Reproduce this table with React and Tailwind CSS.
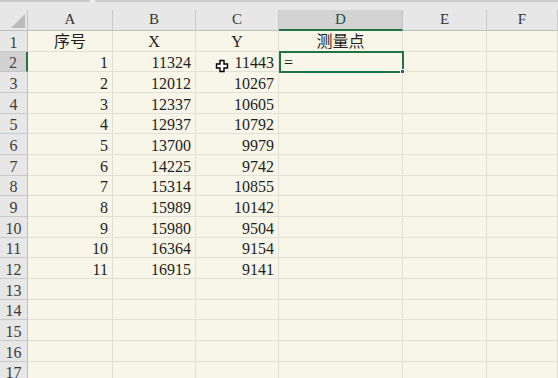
const colB = [11324, 12012, 12337, 12937, 13700, 14225, 15314, 15989, 15980, 16364, 16915];
const colC = [11443, 10267, 10605, 10792, 9979, 9742, 10855, 10142, 9504, 9154, 9141];

const cols = ["A", "B", "C", "D", "E", "F"];

function buildRows() {
  const rows = [];
  for (let r = 1; r <= 17; r++) {
    let cells = ["", "", "", "", "", ""];
    if (r === 1) cells = ["序号", "X", "Y", "测量点", "", ""];
    else if (r <= 12) cells = [String(r - 1), String(colB[r - 2]), String(colC[r - 2]), "", "", ""];
    rows.push({ n: r, cells });
  }
  return rows;
}

function CellCursor() {
  return (
    <svg width="14" height="14" viewBox="0 0 14 14" className="absolute left-[215px] top-[59px]">
      <path
        d="M5 1.5h4v3.5h3.5v4H9v3.5H5V9H1.5V5H5z"
        fill="#fff"
        stroke="#000"
        strokeWidth="1.4"
        strokeLinejoin="miter"
      />
    </svg>
  );
}

export default function App() {
  const rows = buildRows();
  const grid = "grid grid-cols-[28px_85px_83px_83px_124px_84px_1fr]";

  return (
    <div className="relative w-[558px] h-[378px] overflow-hidden bg-[#f8f6e8] text-[#1e1e1e] font-['Liberation_Serif','Noto_Sans_CJK_SC',serif]">
      {/* top edge */}
      <div className="flex h-[2px]">
        <div className="w-[90px] bg-[#c9c9c9]" />
        <div className="w-[5px] bg-[#f0f0f0]" />
        <div className="flex-1 bg-[#cdcdcd]" />
      </div>
      <div className="h-[8px] bg-[#e7e7e7]" />

      {/* column headers */}
      <div className={`${grid} h-[21px] bg-[#e7e7e7] border-b border-[#bfbfbf]`}>
        <div className="relative border-r border-[#c4c4c4]">
          <svg width="16" height="15" viewBox="0 0 16 15" className="absolute left-[10px] top-[4px]">
            <path d="M15 0V14H1z" fill="#bcbcbc" />
          </svg>
        </div>
        {cols.map((c) => (
          <div
            key={c}
            className={
              c === "D"
                ? "flex items-end justify-center bg-[#d3d3d3] border-b-2 border-[#217346] -mb-px text-[#23553d] text-[15px] leading-[15px] pb-[2px] border-r border-r-[#c4c4c4]"
                : "flex items-end justify-center border-r border-[#c9c9c9] text-[#333] text-[15px] leading-[15px] pb-[3px]"
            }
          >
            {c}
          </div>
        ))}
      </div>

      {/* body */}
      {rows.map((row) => (
        <div key={row.n} className={`${grid} h-[20.67px]`}>
          <div
            className={
              row.n === 2
                ? "flex items-end justify-center bg-[#d2d2d2] border-r-2 border-[#217346] border-b border-b-[#c4c4c4] text-[#4a4a4a] text-[16px] leading-[16px]"
                : "flex items-end justify-center bg-[#e7e7e7] border-r border-[#bfbfbf] border-b border-b-[#c9c9c9] text-[#3c3c3c] text-[16px] leading-[16px]"
            }
          >
            {row.n}
          </div>
          {row.cells.map((v, i) => {
            const text = row.n === 1;
            return (
              <div
                key={i}
                className={
                  text
                    ? "flex items-end justify-center border-r border-b border-[#e1e0d5] text-[16px] leading-[16px] pb-px"
                    : "flex items-end justify-end pr-[4px] border-r border-b border-[#e1e0d5] text-[16px] leading-[16px]"
                }
              >
                {v}
              </div>
            );
          })}
        </div>
      ))}

      {/* active cell D2 */}
      <div className="absolute left-[279px] top-[51px] w-[125px] h-[22px] border-2 border-[#217346] flex items-end pl-[3px] text-[16px] leading-[16px]">
        =
        <div className="absolute -right-[3px] -bottom-[3px] w-[5px] h-[5px] bg-[#217346] border border-white" />
      </div>

      <CellCursor />
    </div>
  );
}
